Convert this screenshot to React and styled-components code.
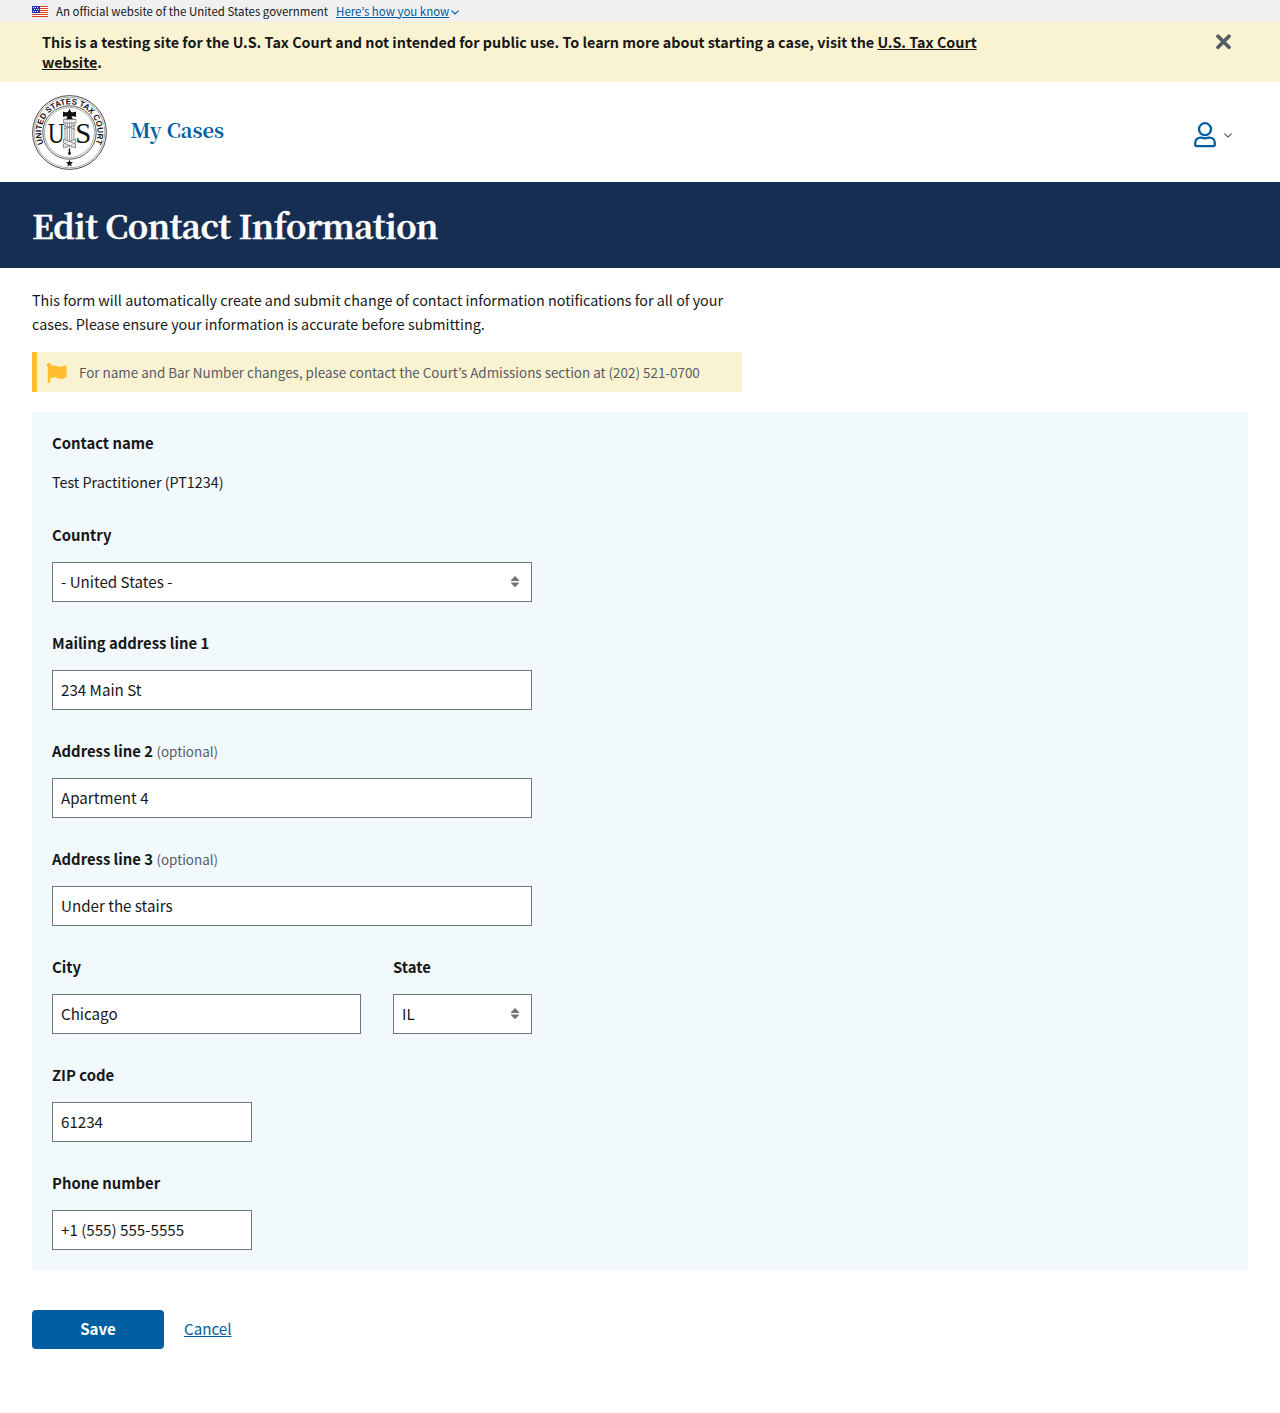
import React from 'react';
import styled, { createGlobalStyle } from 'styled-components';

const sans = '"Noto Sans CJK KR", "Noto Sans", sans-serif';
const serif = '"Noto Serif CJK KR", "Noto Serif CJK SC", "Liberation Serif", serif';

const GlobalStyle = createGlobalStyle`
  * { box-sizing: border-box; }
  body {
    margin: 0;
    background: #fff;
    color: #171717;
    font-family: ${sans};
    font-size: 14.33px;
    line-height: 24px;
  }
  input, select, button { font-family: inherit; }
`;

const GovBanner = styled.div`
  display: flex;
  align-items: center;
  height: 22px;
  padding: 1px 32px 0;
  background: #f0f0f0;
  font-size: 11.48px;
  line-height: 20px;
  white-space: nowrap;
  svg { display: block; flex: none; }
  svg:last-child { margin-top: 1px; }
`;
const GovText = styled.span`
  margin: -2px 8px 0;
`;
const GovLink = styled.a`
  color: #005ea2;
  text-decoration: underline;
  margin: -2px 2px 0 0;
`;

const Warning = styled.div`
  display: flex;
  justify-content: space-between;
  align-items: flex-start;
  height: 60px;
  padding: 10px 48px 0 42px;
  background: #faf3d1;
  svg { display: block; margin-top: 2px; }
`;
const WarningText = styled.p`
  margin: 0;
  width: 960px;
  font-size: 14.33px;
  font-weight: 700;
  line-height: 20px;
  a { color: inherit; text-decoration: underline; }
`;

const Header = styled.header`
  display: flex;
  align-items: center;
  height: 100px;
  padding: 0 48px 0 32px;
`;
const NavLink = styled.a`
  margin: -5px auto 0 23.5px;
  color: #005ea2;
  font-family: ${serif};
  font-size: 20.1px;
  font-weight: 700;
  line-height: 30px;
`;
const Account = styled.button`
  display: flex;
  align-items: center;
  gap: 8px;
  padding: 0;
  margin-top: 5px;
  border: 0;
  background: none;
  svg { display: block; }
  svg + svg { margin-top: 1px; }
`;

const Hero = styled.div`
  height: 86px;
  padding: 21px 32px 0;
  background: #162e51;
`;
const Title = styled.h1`
  margin: 0;
  color: #fff;
  font-family: ${serif};
  font-size: 32.8px;
  font-weight: 700;
  letter-spacing: -.52px;
  line-height: 44px;
  -webkit-text-stroke: .4px #fff;
`;

const Main = styled.main`
  padding: 20px 32px 64px;
`;
const Intro = styled.p`
  margin: 0 0 16px;
  width: 710px;
`;
const Notice = styled.div`
  display: flex;
  align-items: center;
  gap: 11px;
  width: 710px;
  height: 40px;
  padding-left: 9px;
  border-left: 5px solid #ffbe2e;
  background: #faf3d1;
  color: #565c65;
  font-size: 13.43px;
  svg { margin-top: 2px; }
  span { margin-left: 1px; }
`;
const Panel = styled.section`
  display: flex;
  flex-direction: column;
  gap: 30px;
  margin-top: 20px;
  padding: 19px 20px 21px;
  background: #f1f9fc;
`;
const FieldBox = styled.div`
  display: flex;
  flex-direction: column;
  width: ${p => p.$w}px;
`;
const Label = styled.label`
  height: 24px;
  margin-bottom: 15px;
  font-size: 14.85px;
  font-weight: 700;
  white-space: nowrap;
  & + input, & + div { margin-bottom: -1px; }
`;
const Optional = styled.span`
  color: #565c65;
  font-size: 13.4px;
  font-weight: 400;
`;
const Value = styled.div`
  height: 24px;
`;
const Input = styled.input`
  width: 100%;
  height: 40px;
  padding: 0 8px 2px;
  border: 1px solid #71767a;
  border-radius: 0;
  background: #fff;
  color: #171717;
  font-size: 15.15px;
`;
const SelectWrap = styled.div`
  display: grid;
  align-items: center;
  > * { grid-area: 1 / 1; }
  svg { justify-self: end; margin-right: 12px; pointer-events: none; }
`;
const Select = styled(Input).attrs({ as: 'select' })`
  appearance: none;
`;
const Row = styled.div`
  display: flex;
  gap: 32px;
`;
const Actions = styled.div`
  display: flex;
  align-items: center;
  gap: 20px;
  margin-top: 40px;
`;
const Save = styled.button`
  width: 132px;
  height: 39px;
  padding: 0 0 3px;
  border: 0;
  border-radius: 4px;
  background: #005ea2;
  color: #fff;
  font-size: 15.1px;
  font-weight: 700;
`;
const Cancel = styled.a`
  margin-top: -3px;
  color: #005ea2;
  font-size: 15.15px;
  text-decoration: underline;
`;

const FlagUS = () => (
  <svg width="16" height="11" viewBox="0 0 16 11">
    <rect width="16" height="11" fill="#fff" />
    {[0, 2, 4, 6, 8, 10].map(y => <rect key={y} y={y} width="16" height="1" fill="#db3e1f" />)}
    <rect width="8" height="7" fill="#1e33b1" />
    {[[1, 1], [3, 1], [5, 1], [2, 3], [4, 3], [6, 3], [1, 5], [3, 5], [5, 5]].map(([x, y]) => (
      <rect key={`${x}-${y}`} x={x} y={y} width="1" height="1" fill="#fff" />
    ))}
  </svg>
);
const Chevron = ({ w, h, color }) => (
  <svg width={w} height={h} viewBox="0 0 8 5" fill="none" stroke={color} strokeWidth="1.1" strokeLinecap="round" strokeLinejoin="round">
    <path d="M.7.8 4 4 7.3.8" />
  </svg>
);
const Close = () => (
  <svg width="17" height="16" viewBox="0 0 17 16" fill="none" stroke="#565c65" strokeWidth="3.7" strokeLinecap="round">
    <path d="M3 2.200 14 13.200M14 2.200 3 13.200" />
  </svg>
);
const User = () => (
  <svg width="22" height="26" viewBox="0 0 22 26" fill="none" stroke="#005ea2" strokeWidth="2.3" strokeLinejoin="round">
    <circle cx="11" cy="7.200" r="6" />
    <path d="M6.5 15.600c1.8 0 2.3.7 4.5.7s2.700-.7 4.500-.7c3.200 0 5.300 2.300 5.300 5.300v1.600c0 .9-.7 1.600-1.600 1.600H2.800c-.9 0-1.600-.7-1.600-1.600v-1.600c0-3 2.100-5.300 5.300-5.300z" />
  </svg>
);
const NoticeFlag = () => (
  <svg width="21" height="20" viewBox="0 0 512 512" fill="#ffbe2e">
    <path d="M349.565 98.783C295.978 98.783 251.721 64 184.348 64c-24.955 0-47.309 4.384-68.045 12.013a55.947 55.947 0 0 0 3.586-23.562C118.117 24.015 94.806 1.206 66.338.048 34.345-1.254 8 24.296 8 56c0 19.026 9.497 35.825 24 45.945V488c0 13.255 10.745 24 24 24h16c13.255 0 24-10.745 24-24v-94.400c28.311-12.064 63.582-22.122 114.435-22.122 53.588 0 97.844 34.783 165.217 34.783 48.169 0 86.667-16.294 122.505-40.858C506.840 359.452 512 349.571 512 339.045v-243.100c0-23.393-24.269-38.870-45.485-29.016-34.338 15.948-76.454 31.854-116.950 31.854z" />
  </svg>
);
const Sort = () => (
  <svg width="10" height="12" viewBox="0 0 10 12" fill="#71767a">
    <path d="M5 .1 9.200 4.300q0 .7-.6.700H1.400q-.6 0-.6-.7zM5 11.300.8 7.100q0-.7.6-.7h7.200q.6 0 .6.700z" />
  </svg>
);

const Seal = () => (
  <svg width="75" height="75" viewBox="0 .5 75 75" fill="none">
    <defs>
      <path id="ring" d="M17.600 57.900A28.150 28.150 0 1 1 57.400 57.900" />
    </defs>
    <circle cx="37.500" cy="38" r="36.900" stroke="#333" strokeWidth=".9" />
    <circle cx="37.500" cy="38" r="35.300" stroke="#888" strokeWidth=".7" />
    <circle cx="37.500" cy="38" r="26.700" stroke="#444" strokeWidth=".9" />
    <circle cx="37.500" cy="38" r="25" stroke="#888" strokeWidth=".7" />
    <text fill="#111" fontFamily="Liberation Sans, sans-serif" fontSize="8.200" fontWeight="700">
      <textPath href="#ring" startOffset="50%" textAnchor="middle" textLength="111" lengthAdjust="spacingAndGlyphs">UNITED STATES TAX COURT</textPath>
    </text>
    <g fill="#111" fontFamily="Liberation Serif, serif" fontSize="28.500">
      <text x="15.800" y="48" textLength="17" lengthAdjust="spacingAndGlyphs">U</text>
      <text x="43.200" y="48" textLength="16" lengthAdjust="spacingAndGlyphs">S</text>
    </g>
    <rect x="32" y="24" width="11.500" height="30" fill="#fff" />
    <path d="M33 24v29M35.200 24v29M37.500 24v29M39.800 24v29M42 24v29" stroke="#888" strokeWidth=".9" />
    <path d="M31.500 25h12.500v3.500H31.500zM32 31l11.500 4M32 34.500l11.500-4M31.500 49.500l12-5 0 4-12 5z" stroke="#666" strokeWidth=".7" fill="#fff" fillOpacity=".6" />
    <path d="M31.500 44.500l12 5v4l-12-5z" stroke="#666" strokeWidth=".7" fill="#fff" fillOpacity=".6" />
    <path d="M31 17q2.500 1.500 5 .3l1.500-3 1.500 3q2.500 1.200 5-.3v5.500q-2.500-1.500-4.500-.4l1.300 2.300h-6.600l1.300-2.300q-2-1.100-4.500.4z" fill="#111" />
    <path d="M36.800 54h1.400v3.500l1 1.300-1.700 2.200-1.700-2.200 1-1.300z" fill="#111" />
    <path d="m37.500 65.200 1 2.400 2.500.2-1.900 1.700.6 2.500-2.200-1.400-2.200 1.400.6-2.500-1.900-1.700 2.500-.2z" fill="#111" />
  </svg>
);

const TextField = ({ label, optional, value, width }) => (
  <FieldBox $w={width}>
    <Label>{label}{optional && <> <Optional>(optional)</Optional></>}</Label>
    <Input defaultValue={value} />
  </FieldBox>
);
const SelectField = ({ label, value, width }) => (
  <FieldBox $w={width}>
    <Label>{label}</Label>
    <SelectWrap>
      <Select><option>{value}</option></Select>
      <Sort />
    </SelectWrap>
  </FieldBox>
);

export default function App() {
  return (
    <>
      <GlobalStyle />
      <GovBanner>
        <FlagUS />
        <GovText>An official website of the United States government</GovText>
        <GovLink>Here’s how you know</GovLink>
        <Chevron w={8} h={5} color="#005ea2" />
      </GovBanner>
      <Warning>
        <WarningText>
          This is a testing site for the U.S. Tax Court and not intended for public use. To learn more about starting a case, visit the <a>U.S. Tax Court website</a>.
        </WarningText>
        <Close />
      </Warning>
      <Header>
        <Seal />
        <NavLink>My Cases</NavLink>
        <Account aria-label="Account">
          <User />
          <Chevron w={8} h={5} color="#565c65" />
        </Account>
      </Header>
      <Hero><Title>Edit Contact Information</Title></Hero>
      <Main>
        <Intro>
          This form will automatically create and submit change of contact information notifications for all of your cases. Please ensure your information is accurate before submitting.
        </Intro>
        <Notice>
          <NoticeFlag />
          <span>For name and Bar Number changes, please contact the Court’s Admissions section at (202) 521-0700</span>
        </Notice>
        <Panel>
          <FieldBox $w={480}>
            <Label>Contact name</Label>
            <Value>Test Practitioner (PT1234)</Value>
          </FieldBox>
          <SelectField label="Country" value="- United States -" width={480} />
          <TextField label="Mailing address line 1" value="234 Main St" width={480} />
          <TextField label="Address line 2" optional value="Apartment 4" width={480} />
          <TextField label="Address line 3" optional value="Under the stairs" width={480} />
          <Row>
            <TextField label="City" value="Chicago" width={309} />
            <SelectField label="State" value="IL" width={139} />
          </Row>
          <TextField label="ZIP code" value="61234" width={200} />
          <TextField label="Phone number" value="+1 (555) 555-5555" width={200} />
        </Panel>
        <Actions>
          <Save>Save</Save>
          <Cancel>Cancel</Cancel>
        </Actions>
      </Main>
    </>
  );
}
